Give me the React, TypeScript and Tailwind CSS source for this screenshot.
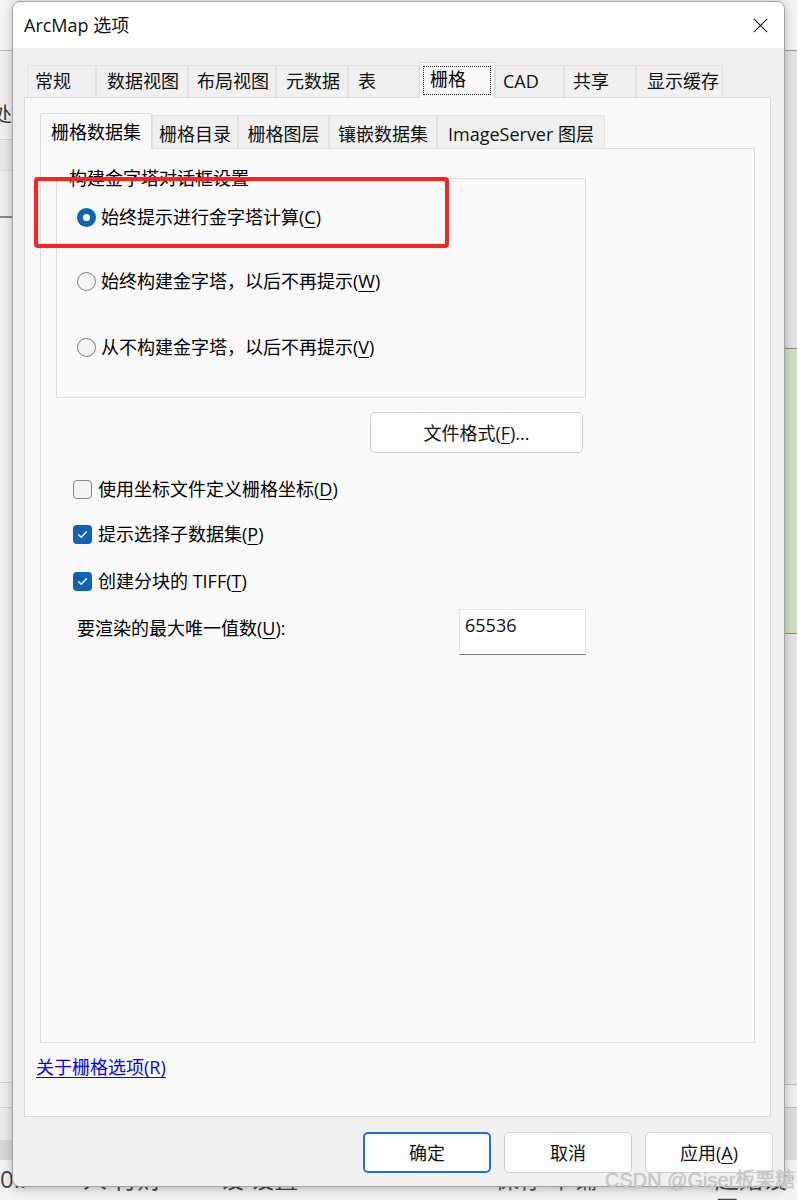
import React from "react";

const F = "font-['Open_Sans','Noto_Sans_CJK_SC',sans-serif]";

function U({ children }: { children: React.ReactNode }) {
  return <span className="underline decoration-[1px] underline-offset-[3px]">{children}</span>;
}

function RadioIcon({ checked }: { checked: boolean }) {
  return checked ? (
    <span className="flex h-[19px] w-[19px] flex-none items-center justify-center rounded-full bg-[#0f62b7]">
      <span className="h-[7px] w-[7px] rounded-full bg-white" />
    </span>
  ) : (
    <span className="h-[19px] w-[19px] flex-none rounded-full border border-[#7d7d7d] bg-[#f4f4f4]" />
  );
}

function CheckIcon({ checked }: { checked: boolean }) {
  return checked ? (
    <span className="flex h-[19px] w-[19px] flex-none items-center justify-center rounded-[4px] bg-[#0f62b7]">
      <svg width="13" height="13" viewBox="0 0 13 13">
        <path d="M2.6 6.8 L5.2 9.2 L10.4 3.8" fill="none" stroke="white" strokeWidth="1.4" strokeLinecap="round" strokeLinejoin="round" />
      </svg>
    </span>
  ) : (
    <span className="h-[19px] w-[19px] flex-none rounded-[4px] border border-[#858585] bg-[#f3f3f3]" />
  );
}

const topTabs: { t: string; cls: string; sel?: boolean }[] = [
  { t: "常规", cls: "w-[69px] pl-[7px]" },
  { t: "数据视图", cls: "w-[92px] pl-[10px]" },
  { t: "布局视图", cls: "w-[88px] pl-[8px]" },
  { t: "元数据", cls: "w-[72px] pl-[9px]" },
  { t: "表", cls: "w-[71px] pl-[9px]" },
  { t: "栅格", cls: "w-[76px]", sel: true },
  { t: "CAD", cls: "w-[69px] pl-[7px]" },
  { t: "共享", cls: "w-[72px] pl-[8px]" },
  { t: "显示缓存", cls: "w-[87px] pl-[10px]" },
];

const subTabs: { t: string; cls: string; sel?: boolean }[] = [
  { t: "栅格数据集", cls: "w-[112px]", sel: true },
  { t: "栅格目录", cls: "w-[86px]" },
  { t: "栅格图层", cls: "w-[91px]" },
  { t: "镶嵌数据集", cls: "w-[108px]" },
  { t: "ImageServer 图层", cls: "w-[168px]" },
];

function Background() {
  return (
    <>
      {/* left strip */}
      <div className="absolute left-0 top-0 h-[1200px] w-[14px] bg-[#ebebeb]">
        <div className="h-[50px] bg-[#f4f4f4]" />
        <div className="h-px bg-[#b4b4b4]" />
        <div className="relative h-[88px] bg-[#efefef]">
          <span className="absolute -left-[8px] top-[52px] text-[20px] leading-[24px] text-[#333]">处</span>
        </div>
        <div className="h-px bg-[#cfcfcf]" />
        <div className="h-[30px] bg-[#e6e6e6]" />
        <div className="h-px bg-[#d6d6d6]" />
        <div className="h-[45px] bg-[#ececec]" />
        <div className="h-[2px] bg-[#8c8c8c]" />
        <div className="h-[864px] bg-[#f0f0f0]" />
        <div className="h-px bg-[#cfcfcf]" />
        <div className="h-[24px] bg-[#ebebeb]" />
        <div className="h-px bg-[#cfcfcf]" />
        <div className="h-[32px] bg-[#e9e9e9]" />
        <div className="h-[60px] bg-[#d6d6d6]" />
      </div>
      {/* right strip */}
      <div className="absolute right-0 top-0 h-[1200px] w-[16px] bg-[#dedede]">
        <div className="h-[50px] bg-[#f2f2f2]" />
        <div className="h-px bg-[#9a9a9a]" />
        <div className="h-[297px] bg-[#e2e2e2]" />
        <div className="h-[286px] border-l border-t border-b border-[#8a8a8a] bg-[#cde0bd]" />
        <div className="h-[450px] bg-[#e4e4e4]" />
        <div className="h-px bg-[#b9b9b9]" />
        <div className="h-[22px] bg-[#eeeeee]" />
        <div className="h-px bg-[#b9b9b9]" />
      </div>
      {/* bottom strip */}
      <div className="absolute bottom-0 left-0 h-[40px] w-[797px] bg-[#f3f3f3]">
        <span className="absolute left-0 top-[4px] text-[24px] leading-[30px] text-[#444]">0..</span>
        <span className="absolute left-[83px] top-[4px] text-[24px] leading-[30px] text-[#444]">人 行财 一</span>
        <span className="absolute left-[220px] top-[4px] text-[24px] leading-[30px] text-[#444]">设 设置</span>
        <span className="absolute left-[495px] top-[4px] text-[24px] leading-[30px] text-[#555]">保存 平铺</span>
        <span className="absolute left-[715px] top-[4px] text-[24px] leading-[30px] text-[#444]">起始设置</span>
      </div>
    </>
  );
}

export default function App() {
  return (
    <div className={`relative h-[1200px] w-[797px] overflow-hidden bg-[#ededed] pl-[12px] pt-[1px] text-black ${F}`}>
      <Background />
      <div className="relative z-10 flex h-[1186px] w-[773px] flex-col overflow-hidden rounded-[8px] border border-[#a3a3a3] bg-[#f0f0f0] shadow-[0_2px_10px_rgba(0,0,0,0.25)]">
        {/* title bar */}
        <div className="flex h-[46px] flex-none items-center justify-between bg-white pl-[11px] pr-[16px]">
          <span className="text-[18px] leading-[24px] text-[#111]">ArcMap 选项</span>
          <svg width="15" height="15" viewBox="0 0 15 15">
            <path d="M0.8 0.8 L14.2 14.2 M14.2 0.8 L0.8 14.2" stroke="#1a1a1a" strokeWidth="1.2" fill="none" />
          </svg>
        </div>

        {/* body */}
        <div className="flex flex-1 flex-col pl-[11px] pr-[13px] pt-[14px]">
          {/* top tabs */}
          <div className="flex h-[35px] items-end pl-[3px]">
            {topTabs.map((tab) =>
              tab.sel ? (
                <div
                  key={tab.t}
                  className={`relative z-[1] -mb-px flex h-[36px] flex-none border border-b-0 border-[#d9d9d9] bg-[#f9f9f9] p-[3px] pb-[3px] ${tab.cls}`}
                >
                  <div className="flex-1 border border-dotted border-[#222] pl-[6px] text-[18px] leading-[24px]">{tab.t}</div>
                </div>
              ) : (
                <div
                  key={tab.t}
                  className={`h-[32px] flex-none border border-b-0 border-[#e2e2e2] bg-[#f0f0f0] pt-[3px] text-[18px] leading-[24px] text-[#111] ${tab.cls}`}
                >
                  {tab.t}
                </div>
              )
            )}
          </div>

          {/* outer panel */}
          <div className="flex h-[1020px] flex-none flex-col border border-[#d9d9d9] bg-[#f9f9f9] pt-[15px]">
            {/* sub tabs */}
            <div className="flex h-[35px] items-end pl-[15px]">
              {subTabs.map((tab) =>
                tab.sel ? (
                  <div
                    key={tab.t}
                    className={`relative z-[1] -mb-px h-[36px] flex-none border border-b-0 border-[#d9d9d9] bg-[#f9f9f9] pt-[6px] text-center text-[18px] leading-[24px] ${tab.cls}`}
                  >
                    {tab.t}
                  </div>
                ) : (
                  <div
                    key={tab.t}
                    className={`h-[33px] flex-none border border-b-0 border-[#e2e2e2] bg-[#f0f0f0] pt-[6px] text-center text-[18px] leading-[24px] text-[#111] ${tab.cls}`}
                  >
                    {tab.t}
                  </div>
                )
              )}
            </div>

            {/* inner panel */}
            <div className="mx-[15px] flex h-[895px] flex-none flex-col border border-[#dedede] bg-[#f9f9f9]">
              {/* group box */}
              <div className="relative ml-[15px] mt-[29px] flex h-[220px] w-[530px] flex-none flex-col border border-[#dcdcdc] pl-[20px] pt-[26px]">
                <span className="absolute left-[12px] -top-[11px] bg-[#f9f9f9] pr-[1px] text-[18px] leading-[20px]">构建金字塔对话框设置</span>
                <div className="flex h-[24px] items-center gap-[5px] text-[18px] leading-[24px]">
                  <RadioIcon checked />
                  <span>始终提示进行金字塔计算(<U>C</U>)</span>
                </div>
                <div className="mt-[40px] flex h-[24px] items-center gap-[5px] text-[18px] leading-[24px]">
                  <RadioIcon checked={false} />
                  <span>始终构建金字塔，以后不再提示(<U>W</U>)</span>
                </div>
                <div className="mt-[42px] flex h-[24px] items-center gap-[5px] text-[18px] leading-[24px]">
                  <RadioIcon checked={false} />
                  <span>从不构建金字塔，以后不再提示(<U>V</U>)</span>
                </div>
              </div>

              {/* file format button */}
              <div className="ml-[329px] mt-[14px] flex h-[41px] w-[213px] flex-none items-center justify-center rounded-[5px] border border-[#d0d0d0] bg-[#fdfdfd] text-[18px] leading-[24px] text-[#111]">
                文件格式(<U>F</U>)...
              </div>

              {/* checkboxes */}
              <div className="ml-[32px] mt-[24px] flex h-[24px] items-center gap-[6px] text-[18px] leading-[24px]">
                <CheckIcon checked={false} />
                <span>使用坐标文件定义栅格坐标(<U>D</U>)</span>
              </div>
              <div className="ml-[32px] mt-[21px] flex h-[24px] items-center gap-[6px] text-[18px] leading-[24px]">
                <CheckIcon checked />
                <span>提示选择子数据集(<U>P</U>)</span>
              </div>
              <div className="ml-[32px] mt-[23px] flex h-[24px] items-center gap-[6px] text-[18px] leading-[24px]">
                <CheckIcon checked />
                <span>创建分块的 TIFF(<U>T</U>)</span>
              </div>

              {/* max unique values */}
              <div className="ml-[36px] mt-[16px] flex items-start">
                <span className="w-[382px] pt-[7px] text-[18px] leading-[24px]">要渲染的最大唯一值数(<U>U</U>):</span>
                <div className="h-[46px] w-[127px] border border-b-[#7a7a7a] border-l-[#e4e4e4] border-r-[#e4e4e4] border-t-[#e4e4e4] bg-white pl-[5px] pt-[3px] text-[18px] leading-[24px] text-[#111]">
                  65536
                </div>
              </div>
            </div>

            {/* link */}
            <div className="mt-[12px] pl-[11px] text-[18px] leading-[24px]">
              <span className="text-[#0000ff] underline decoration-[1px] underline-offset-[3px]">关于栅格选项(R)</span>
            </div>
          </div>

          {/* dialog buttons */}
          <div className="-mr-[2px] mt-[15px] flex justify-end gap-[13px]">
            <div className="flex h-[41px] w-[128px] items-center justify-center rounded-[5px] border-2 border-[#1a73cc] bg-[#fdfdfd] text-[18px] leading-[24px] text-[#111]">
              确定
            </div>
            <div className="flex h-[41px] w-[128px] items-center justify-center rounded-[5px] border border-[#d0d0d0] bg-[#fdfdfd] text-[18px] leading-[24px] text-[#111]">
              取消
            </div>
            <div className="flex h-[41px] w-[128px] items-center justify-center rounded-[5px] border border-[#d0d0d0] bg-[#fdfdfd] text-[18px] leading-[24px] text-[#111]">
              应用(<U>A</U>)
            </div>
          </div>
        </div>
      </div>

      {/* red annotation box */}
      <div className="absolute left-[34px] top-[177px] z-20 h-[71px] w-[415px] rounded-[4px] border-[4.5px] border-[#fb2222]" />

      {/* watermark */}
      <div className="absolute left-[605px] top-[1166px] z-20 whitespace-nowrap font-['Liberation_Sans','Noto_Sans_CJK_SC',sans-serif] text-[20px] leading-[28px] text-[#c8c8c8] [text-shadow:0_0_1px_rgba(0,0,0,0.2)]">
        CSDN @Giser板栗糖不吃栗子
      </div>
    </div>
  );
}
